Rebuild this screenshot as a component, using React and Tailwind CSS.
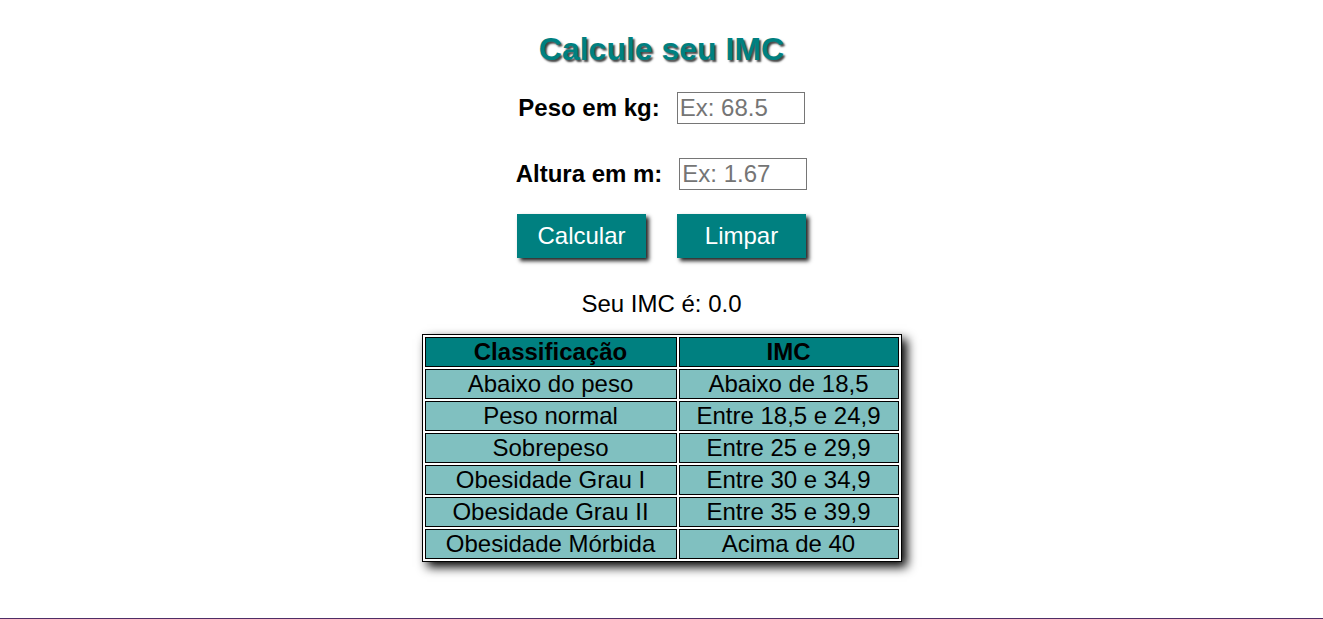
import React from "react";

const rows = [
  ["Abaixo do peso", "Abaixo de 18,5"],
  ["Peso normal", "Entre 18,5 e 24,9"],
  ["Sobrepeso", "Entre 25 e 29,9"],
  ["Obesidade Grau I", "Entre 30 e 34,9"],
  ["Obesidade Grau II", "Entre 35 e 39,9"],
  ["Obesidade Mórbida", "Acima de 40"],
];

export default function App() {
  return (
    <div className="bg-white text-black font-['Liberation_Sans',Arial,sans-serif]">
      <div className="h-[618px] flex flex-col items-center">
        <h1 className="mt-[31px] h-[36px] leading-[36px] text-[32px] font-bold text-[#008080] [text-shadow:2px_2px_2px_#444]">
          Calcule seu IMC
        </h1>
        <div className="mt-[25px] h-[32px] flex items-center gap-[17px]">
          <label className="text-[24px] leading-[28px] font-bold">Peso em kg:</label>
          <input
            type="text"
            placeholder="Ex: 68.5"
            className="w-[128px] h-[32px] border border-[#767676] px-[2px] text-[24px] leading-[28px] placeholder:text-[#757575] outline-none"
          />
        </div>
        <div className="mt-[34px] h-[32px] flex items-center gap-[17px]">
          <label className="text-[24px] leading-[28px] font-bold">Altura em m:</label>
          <input
            type="text"
            placeholder="Ex: 1.67"
            className="w-[128px] h-[32px] border border-[#767676] px-[2px] text-[24px] leading-[28px] placeholder:text-[#757575] outline-none"
          />
        </div>
        <div className="mt-[24px] flex gap-[31px]">
          <button className="w-[129px] h-[44px] bg-[#008080] text-white text-[24px] leading-[28px] shadow-[3px_3px_4px_#222]">
            Calcular
          </button>
          <button className="w-[129px] h-[44px] bg-[#008080] text-white text-[24px] leading-[28px] shadow-[3px_3px_4px_#222]">
            Limpar
          </button>
        </div>
        <p className="mt-[32px] h-[28px] text-[24px] leading-[28px]">Seu IMC é: 0.0</p>
        <table className="mt-[16px] w-[480px] border border-black border-separate border-spacing-[2px] shadow-[5px_5px_10px_#000] text-[24px] leading-[28px]">
          <thead>
            <tr>
              <th className="w-[252px] h-[30px] p-0 border border-black bg-[#008080] font-bold">Classificação</th>
              <th className="h-[30px] p-0 border border-black bg-[#008080] font-bold">IMC</th>
            </tr>
          </thead>
          <tbody>
            {rows.map(([a, b]) => (
              <tr key={a}>
                <td className="h-[30px] p-0 border border-black bg-[#80c0c0] text-center">{a}</td>
                <td className="h-[30px] p-0 border border-black bg-[#80c0c0] text-center">{b}</td>
              </tr>
            ))}
          </tbody>
        </table>
      </div>
      <footer className="h-[40px] bg-[#4f2d66]"></footer>
    </div>
  );
}
